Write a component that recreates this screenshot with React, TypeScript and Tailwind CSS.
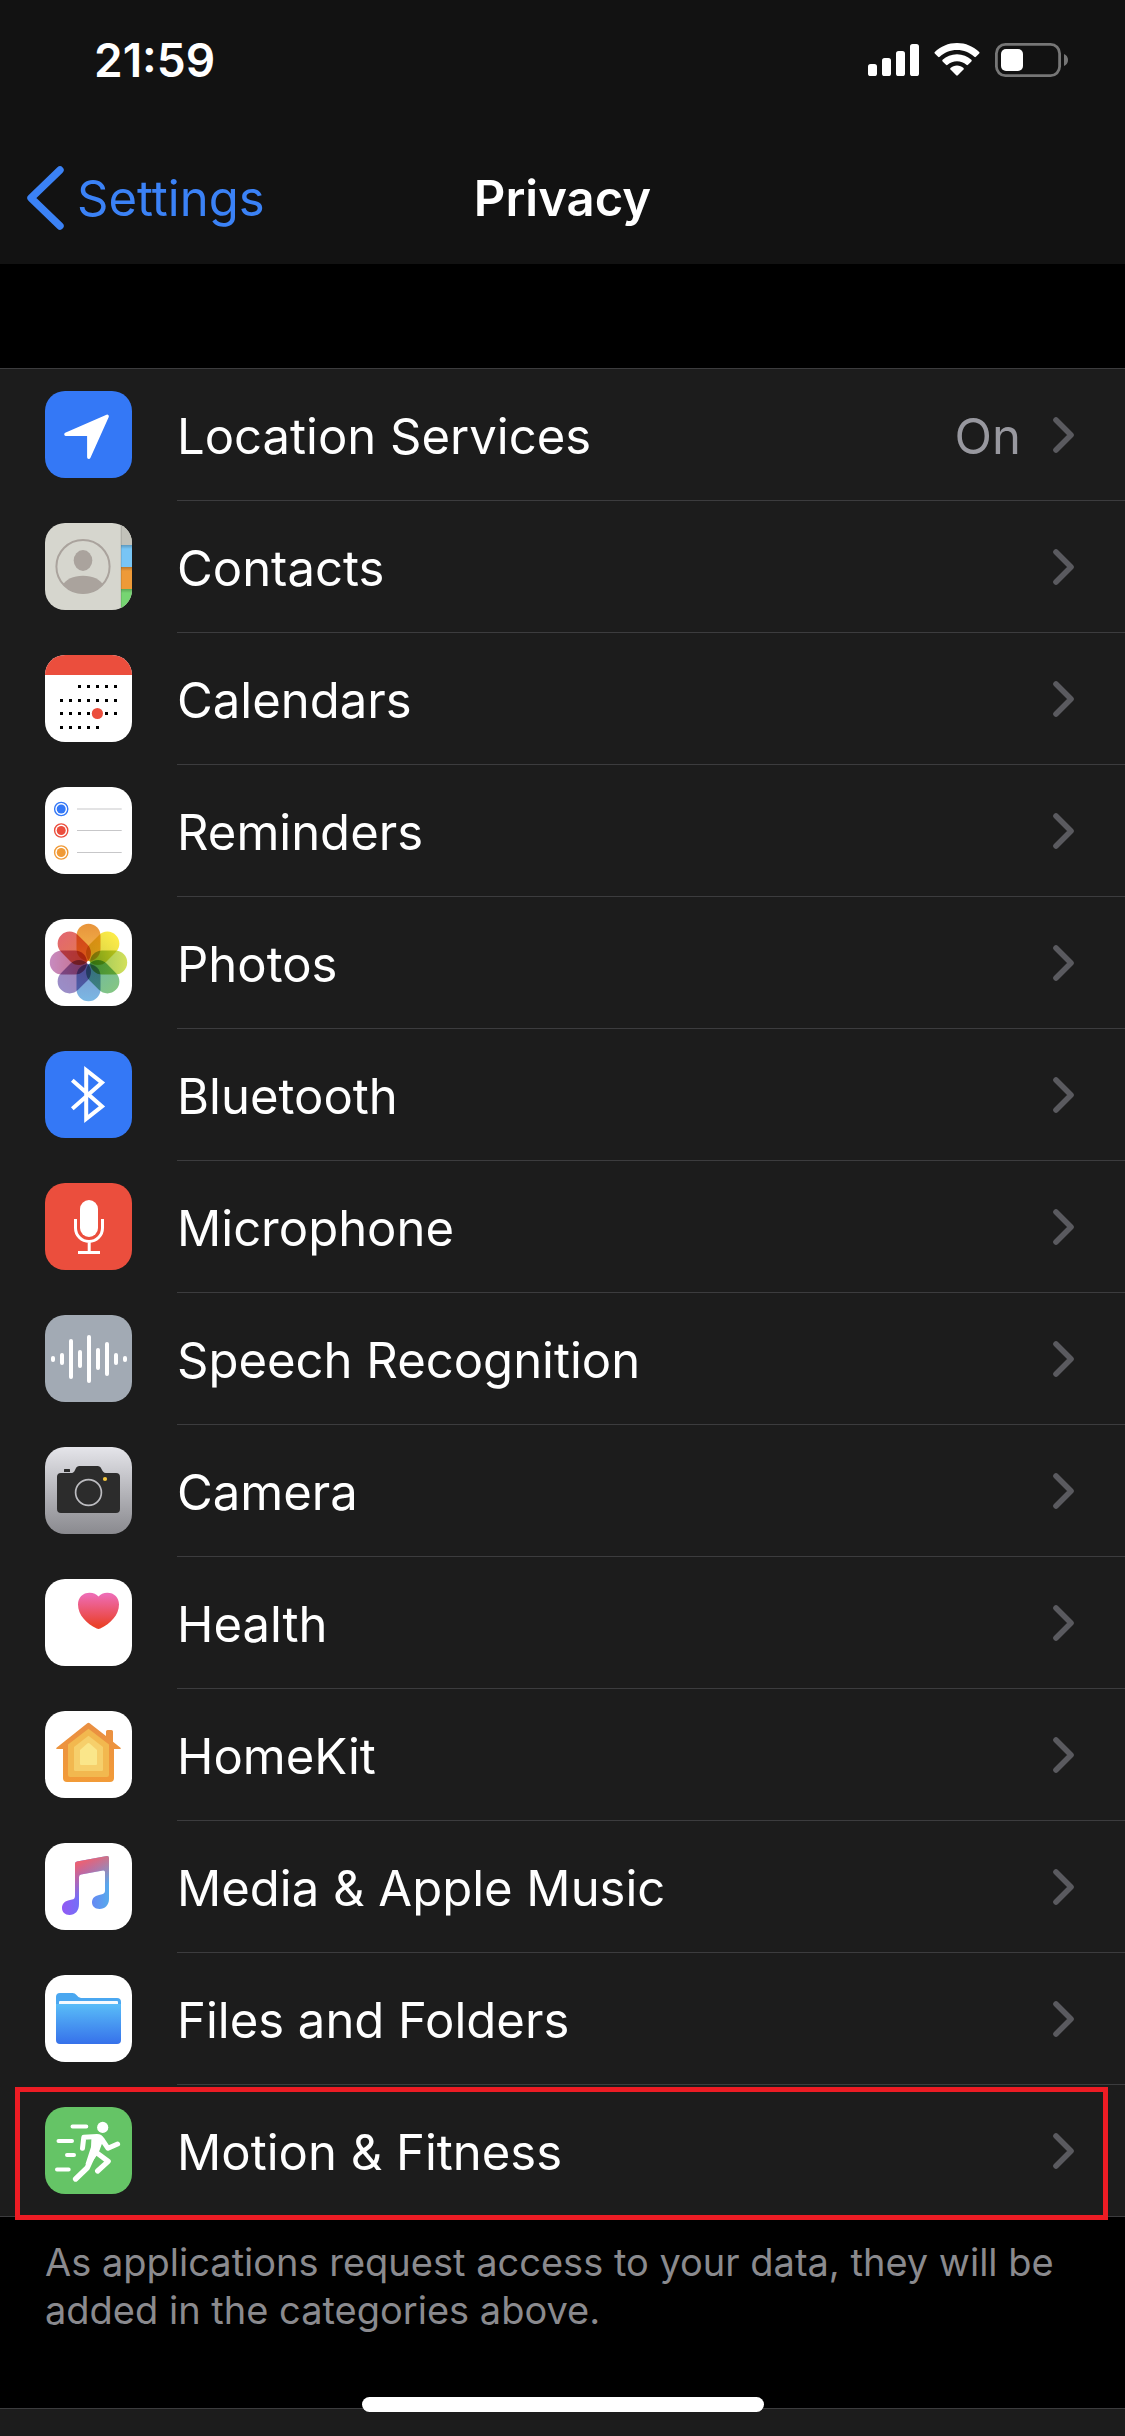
import type { ReactNode } from "react";

type IconProps = { bg?: string; children?: ReactNode };

const AppIcon = ({ bg = "bg-white", children }: IconProps) => (
  <span className={`mb-px block size-[87px] shrink-0 overflow-hidden rounded-[20px] ${bg}`}>
    <svg viewBox="0 0 87 87" className="isolate block size-full" aria-hidden="true">
      {children}
    </svg>
  </span>
);

const LocationIcon = () => (
  <AppIcon bg="bg-[#3478f6]">
    <path
      d="M62.2 25.3 L20.9 43.2 H43.8 V66.3 Z"
      fill="#fff"
      stroke="#fff"
      strokeWidth="3.4"
      strokeLinejoin="round"
    />
  </AppIcon>
);

const ContactsIcon = () => (
  <AppIcon bg="bg-[#d6d6ce]">
    <defs>
      <clipPath id="contact-clip">
        <circle cx="38" cy="43.5" r="27" />
      </clipPath>
      <linearGradient id="contact-tab" x1="0" y1="0" x2="0" y2="1">
        <stop offset="0" stopColor="#000" stopOpacity=".22" />
        <stop offset="1" stopColor="#000" stopOpacity="0" />
      </linearGradient>
    </defs>
    <rect x="76" width="11" height="22" fill="#c2c2ba" />
    <rect x="76" y="22" width="11" height="22" fill="#78c5f5" />
    <rect x="76" y="44" width="11" height="22" fill="#ee9a38" />
    <rect x="76" y="66" width="11" height="21" fill="#76d572" />
    {[22, 44, 66].map((y) => (
      <rect key={y} x="76" y={y} width="11" height="4" fill="url(#contact-tab)" />
    ))}
    <rect x="75.6" width="1" height="87" fill="#000" opacity=".15" />
    <circle cx="38" cy="43.5" r="26.6" fill="none" stroke="#aaa39d" strokeWidth="2" />
    <ellipse cx="38" cy="37.5" rx="9.3" ry="10.4" fill="#aaa39d" />
    <path
      d="M17 63 C21 56 28 52.7 38 52.7 C48 52.7 55 56 59 63 L56 75 H20 Z"
      fill="#aaa39d"
      clipPath="url(#contact-clip)"
    />
  </AppIcon>
);

const calendarRows = [
  { y: 30, cols: [33, 42, 51, 60, 69] },
  { y: 44, cols: [15, 24, 33, 42, 51, 60, 69] },
  { y: 57, cols: [15, 24, 33, 42, 51, 60, 69] },
  { y: 71, cols: [15, 24, 33, 42, 51] },
];

const CalendarIcon = () => (
  <AppIcon>
    <rect width="87" height="20" fill="#eb4e3d" />
    {calendarRows.map((row) =>
      row.cols.map((x) => <rect key={`${x}-${row.y}`} x={x} y={row.y} width="3" height="3" />)
    )}
    <circle cx="52.4" cy="58.5" r="5.6" fill="#eb4e3d" />
  </AppIcon>
);

const RemindersIcon = () => (
  <AppIcon>
    {[
      { y: 22, color: "#3478f6" },
      { y: 43.5, color: "#eb4e3d" },
      { y: 65.5, color: "#f09a37" },
    ].map(({ y, color }) => (
      <g key={y}>
        <circle cx="16.2" cy={y} r="6.6" fill="none" stroke={color} strokeWidth="1.4" />
        <circle cx="16.2" cy={y} r="4.5" fill={color} />
        <path d={`M32 ${y} H76.7`} stroke="#c7c7c9" />
      </g>
    ))}
  </AppIcon>
);

const petals = [
  ["#e8943c", "#f4bb4d"],
  ["#fdec49", "#d3ce44"],
  ["#d3e05b", "#91c15a"],
  ["#84c683", "#6db6a6"],
  ["#7bb8e4", "#7c95cc"],
  ["#9a8ec8", "#a07fb5"],
  ["#c78bc0", "#c66b83"],
  ["#e2686f", "#e57c4c"],
];

const PhotosIcon = () => (
  <AppIcon>
    <defs>
      {petals.map(([from, to], i) => (
        <linearGradient key={i} id={`petal-${i}`} x1="0" y1="0" x2="0" y2="1">
          <stop offset="0" stopColor={from} />
          <stop offset="1" stopColor={to} />
        </linearGradient>
      ))}
    </defs>
    {petals.map((_, i) => (
      <rect
        key={i}
        x="31.5"
        y="4.8"
        width="24"
        height="37.2"
        rx="12"
        fill={`url(#petal-${i})`}
        transform={`rotate(${i * 45} 43.5 43.5)`}
        className="mix-blend-multiply"
      />
    ))}
  </AppIcon>
);

const BluetoothIcon = () => (
  <AppIcon bg="bg-[#3478f6]">
    <path
      d="M27.3 29.3 L57 55.4 L41.2 67.8 V19.2 L57 31.6 L27.3 57.7"
      fill="none"
      stroke="#fff"
      strokeWidth="4"
    />
  </AppIcon>
);

const MicrophoneIcon = () => (
  <AppIcon bg="bg-[#eb4e3d]">
    <rect x="35" y="17" width="18" height="37" rx="9" fill="#fff" />
    <path
      d="M30.5 36 V45 a13.5 13.5 0 0 0 27 0 V36 M44.2 58.5 V69 M33 69.5 H55"
      fill="none"
      stroke="#fff"
      strokeWidth="3"
    />
  </AppIcon>
);

const SpeechIcon = () => (
  <AppIcon bg="bg-[#a2aab4]">
    {[6, 12, 40, 18, 48, 22, 34, 12, 6].map((h, i) => (
      <rect key={i} x={6 + i * 9} y={44 - h / 2} width="4" height={h} rx="2" fill="#fff" />
    ))}
  </AppIcon>
);

const CameraIcon = () => (
  <AppIcon bg="bg-linear-to-b from-[#e5e5ea] to-[#8a8a8f]">
    <path
      d="M16 26 H26 C29 26 29.5 24 30.5 22 C31.6 19.8 32.5 19 34.5 19 H52.5 C54.5 19 55.4 19.8 56.5 22 C57.5 24 58.5 26 61 26 H71 Q75 26 75 30 V62 Q75 66 71 66 H16 Q12 66 12 62 V30 Q12 26 16 26 Z"
      fill="#2c2c2c"
    />
    <rect x="19" y="22" width="6" height="3" rx="0.6" fill="#2c2c2c" />
    <circle cx="43.5" cy="45.5" r="12.9" fill="none" stroke="#bcbcc0" strokeWidth="1.7" />
    <circle cx="60" cy="32" r="2.1" fill="#f6c73d" />
  </AppIcon>
);

const HealthIcon = () => (
  <AppIcon>
    <defs>
      <linearGradient id="heart" x1="0" y1="0" x2="0" y2="1">
        <stop offset="0.05" stopColor="#ee6cb4" />
        <stop offset="0.9" stopColor="#ea412c" />
      </linearGradient>
    </defs>
    <path
      d="M53.5 17.6 C55.5 15 58.5 13.7 62.3 13.7 C69.3 13.7 74 18.6 74 25.5 C74 36 65.5 44.5 55.3 49.6 Q53.5 50.5 51.7 49.6 C41.5 44.5 33 36 33 25.5 C33 18.6 37.7 13.7 44.7 13.7 C48.5 13.7 51.5 15 53.5 17.6 Z"
      fill="url(#heart)"
    />
  </AppIcon>
);

const HomeIcon = () => (
  <AppIcon>
    <defs>
      <linearGradient id="house" x1="0" y1="0" x2="0" y2="1">
        <stop offset="0" stopColor="#e98f42" />
        <stop offset="1" stopColor="#f29b38" />
      </linearGradient>
    </defs>
    <path
      d="M42.3 12.2 Q43.5 11.3 44.7 12.2 L61 25 V20.5 Q61 19 62.5 19 H66.5 Q68 19 68 20.5 V30.7 L75.5 36.7 Q76.5 38 75 38 H69 V67 Q69 71 65 71 H22 Q18 71 18 67 V38 H12 Q10.5 38 11.5 36.7 Z"
      fill="url(#house)"
    />
    <path d="M43.5 17.7 L64 33.5 V64 Q64 66 62 66 H25 Q23 66 23 64 V33.5 Z" fill="#f2b84f" />
    <path d="M43.5 24.7 L58 36 V58.7 Q58 60 56.7 60 H30.3 Q29 60 29 58.7 V36 Z" fill="#f6cf6b" />
    <path
      d="M42.3 32.4 Q43.5 31.4 44.7 32.4 L52 39 V53 Q52 54 51 54 H36 Q35 54 35 53 V39 Z"
      fill="#fae68a"
    />
  </AppIcon>
);

const notePath =
  "M64 15 Q64 12.6 61.7 13 L32 18.6 Q30 19 30 21 V53 Q30 56 27 56.6 L24 57.2 C19.5 58 17 61 17 65 C17 69 20 72 24.5 72 C30 72 34 68 34 61 V34 Q34 32 36 31.6 L58 27.5 Q60 27.1 60 29 V47.5 Q60 50.6 57 51.3 L54 52 C49.5 53 47 55.5 47 59.3 C47 63.3 50 66 54.5 66 C60 66 64 62 64 56 Z";

const MusicIcon = () => (
  <AppIcon>
    <defs>
      <linearGradient id="note-base" x1="0" y1="0" x2="1" y2="0">
        <stop offset="0.05" stopColor="#8f5cf4" />
        <stop offset="0.4" stopColor="#6f72f8" />
        <stop offset="1" stopColor="#57aaec" />
      </linearGradient>
      <linearGradient id="note-top" x1="0.2" y1="0.05" x2="0.45" y2="0.75">
        <stop offset="0.1" stopColor="#f3616a" />
        <stop offset="0.9" stopColor="#f3616a" stopOpacity="0" />
      </linearGradient>
    </defs>
    <path d={notePath} fill="url(#note-base)" />
    <path d={notePath} fill="url(#note-top)" />
  </AppIcon>
);

const FilesIcon = () => (
  <AppIcon>
    <defs>
      <linearGradient id="folder" x1="0" y1="0" x2="0" y2="1">
        <stop offset="0" stopColor="#59bdf8" />
        <stop offset="1" stopColor="#3671ea" />
      </linearGradient>
    </defs>
    <path
      d="M15 18 H27.5 Q30 18 31.5 20 Q33.5 23 36 23 H72 Q76 23 76 27 V40 H11 V22 Q11 18 15 18 Z"
      fill="#4aa7f0"
    />
    <rect x="14" y="26" width="59" height="6" rx="1" fill="#f4faff" />
    <path d="M11 29 H76 V65 Q76 69 72 69 H15 Q11 69 11 65 Z" fill="url(#folder)" />
  </AppIcon>
);

const MotionIcon = () => (
  <AppIcon bg="bg-[#65c466]">
    <g fill="none" stroke="#fff" strokeLinecap="round" strokeLinejoin="round">
      <path d="M27.5 19.5 H41.3 M13.5 34 H27 M22 48 H29 M12 62.5 H23.7" strokeWidth="4" />
      <path d="M37.5 41.3 L38.8 30.3 L52 29.5 Q55.3 29.5 57 32.5 L63 41.3 L72.6 37" strokeWidth="5" />
      <path d="M49 46 L42.3 60.7 L30.6 72" strokeWidth="5.4" />
      <path d="M50 44.5 L63.2 54.3 L52.6 64" strokeWidth="5.2" />
    </g>
    <path d="M46.5 29 H56 L58 34 L53.5 46 L50 51 L43.5 60 L40.5 57 L46 40 Z" fill="#fff" />
    <circle cx="57.7" cy="20.4" r="5.6" fill="#fff" />
  </AppIcon>
);

const items = [
  { label: "Location Services", icon: <LocationIcon />, value: "On" },
  { label: "Contacts", icon: <ContactsIcon /> },
  { label: "Calendars", icon: <CalendarIcon /> },
  { label: "Reminders", icon: <RemindersIcon /> },
  { label: "Photos", icon: <PhotosIcon /> },
  { label: "Bluetooth", icon: <BluetoothIcon /> },
  { label: "Microphone", icon: <MicrophoneIcon /> },
  { label: "Speech Recognition", icon: <SpeechIcon /> },
  { label: "Camera", icon: <CameraIcon /> },
  { label: "Health", icon: <HealthIcon /> },
  { label: "HomeKit", icon: <HomeIcon /> },
  { label: "Media & Apple Music", icon: <MusicIcon /> },
  { label: "Files and Folders", icon: <FilesIcon /> },
  { label: "Motion & Fitness", icon: <MotionIcon />, highlighted: true },
];

const StatusBar = () => (
  <div className="flex h-[120px] items-center justify-between pl-[94px] pr-[57px] text-white">
    <time className="text-[46px] font-semibold leading-none">21:59</time>
    <div className="flex items-center gap-[15px]">
      <svg viewBox="0 0 51 32" className="h-8 w-[51px]" fill="currentColor" aria-hidden="true">
        <rect y="20" width="9" height="12" rx="2.6" />
        <rect x="14" y="14" width="9" height="18" rx="2.6" />
        <rect x="28" y="7" width="9" height="25" rx="2.6" />
        <rect x="42" width="9" height="32" rx="2.6" />
      </svg>
      <svg viewBox="0 0 46 34" className="h-[34px] w-[46px]" fill="currentColor" aria-hidden="true">
        <path d="M23 0 C31.6 0 39.4 3.4 45.2 8.9 Q46 9.7 45.2 10.5 L41.9 13.8 Q41.1 14.6 40.3 13.8 C35.8 9.6 29.7 7 23 7 C16.3 7 10.2 9.6 5.7 13.8 Q4.9 14.6 4.1 13.8 L0.8 10.5 Q0 9.7 0.8 8.9 C6.6 3.4 14.4 0 23 0 Z" />
        <path d="M23 11.2 C28.6 11.2 33.6 13.3 37.4 16.8 Q38.2 17.6 37.4 18.4 L34 21.8 Q33.2 22.6 32.4 21.8 C29.9 19.6 26.6 18.3 23 18.3 C19.4 18.3 16.1 19.6 13.6 21.8 Q12.8 22.6 12 21.8 L8.6 18.4 Q7.8 17.6 8.6 16.8 C12.4 13.3 17.4 11.2 23 11.2 Z" />
        <path d="M23 22.6 C25.5 22.6 27.8 23.5 29.5 25 Q30.2 25.8 29.5 26.6 L23.8 32.3 Q23 33 22.2 32.3 L16.5 26.6 Q15.8 25.8 16.5 25 C18.2 23.5 20.5 22.6 23 22.6 Z" />
      </svg>
      <svg viewBox="0 0 73 34" className="h-[34px] w-[73px]" aria-hidden="true">
        <rect x="1.4" y="1.4" width="63.2" height="31.2" rx="9" fill="none" stroke="#767676" strokeWidth="2.8" />
        <rect x="6" y="6" width="22" height="22" rx="5" fill="#fff" />
        <path d="M69 11 C71.5 12 73 14.3 73 17 C73 19.7 71.5 22 69 23 Z" fill="#767676" />
      </svg>
    </div>
  </div>
);

const Chevron = () => (
  <svg viewBox="0 0 21 36" className="h-9 w-[21px] shrink-0" aria-hidden="true">
    <path
      d="M3 3 L18 18 L3 33"
      fill="none"
      stroke="#5a5a5f"
      strokeWidth="5.6"
      strokeLinecap="round"
      strokeLinejoin="round"
    />
  </svg>
);

const App = () => {
  return (
    <div className="flex min-h-screen w-full flex-col bg-black font-['Inter','Liberation_Sans',sans-serif] text-white">
      <header className="bg-[#121212]">
        <StatusBar />
        <nav className="grid h-36 grid-cols-3 items-center pt-3">
          <a href="#settings" className="flex items-center gap-[13px] pl-[26px] text-[49px] leading-none text-[#3b82f6]">
            <svg viewBox="0 0 38 64" className="h-16 w-[38px] shrink-0" aria-hidden="true">
              <path
                d="M34 4 L5 32 L34 60"
                fill="none"
                stroke="currentColor"
                strokeWidth="7.4"
                strokeLinecap="round"
                strokeLinejoin="round"
              />
            </svg>
            Settings
          </a>
          <h1 className="text-center text-[49px] font-semibold leading-none">Privacy</h1>
        </nav>
      </header>

      <main className="pt-[104px]">
        <ul className="border-y border-[#3c3c3e] bg-[#1c1c1c]">
          {items.map(({ label, icon, value, highlighted }) => (
            <li key={label} className="group relative">
              <a href="#" className="flex h-33 items-center gap-[45px] pl-[45px] group-last:h-[131px]">
                {icon}
                <span className="flex h-full flex-1 items-center gap-8 border-b border-[#3c3c3e] pr-[51px] text-[49px] leading-none group-last:border-b-0">
                  <span className="flex-1 pt-[3px]">{label}</span>
                  {value && <span className="pt-[3px] text-[#98989f]">{value}</span>}
                  <Chevron />
                </span>
              </a>
              {highlighted && (
                <span className="pointer-events-none absolute -bottom-1 left-[15px] right-[17px] top-0.5 border-5 border-[#ed1c24]" />
              )}
            </li>
          ))}
        </ul>
        <p className="px-[45px] pb-[74px] pt-[21px] text-[38px] leading-[48px] text-[#8a8a8e]">
          As applications request access to your data, they will be added in the categories above.
        </p>
      </main>

      <div className="min-h-7 flex-1 border-t border-[#3c3c3e] bg-[#1c1c1c]" />
      <div className="fixed bottom-6 left-1/2 h-[15px] w-[402px] -translate-x-1/2 rounded-full bg-white" />
    </div>
  );
};

export default App;
